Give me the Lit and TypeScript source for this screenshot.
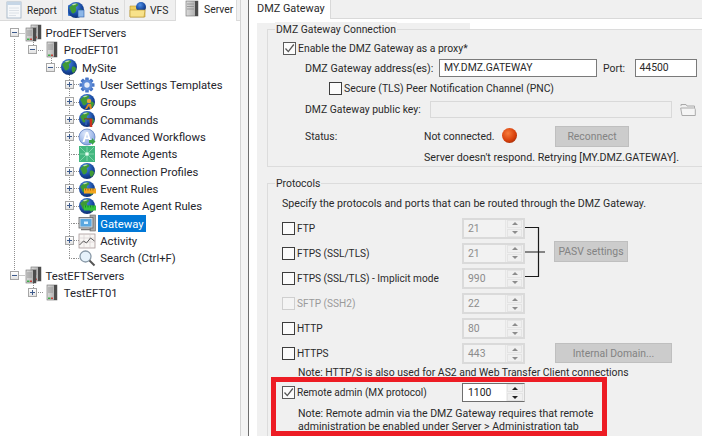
import { LitElement, html, css, svg } from "lit";
import { customElement } from "lit/decorators.js";

const land = svg`<path d="M4 5c2-2 5-3 7-2 1 1-1 2-2 3s1 2 0 4-3 3-4 2-1-3-2-4-1-2 1-3zM12 9c2-1 3 0 4 1 0 2-1 4-3 5-1-1-2-4-1-6z" fill="#3f9a35"/><path d="M5 3.5c1.500-.8 3-1.200 4.500-1 .5.500-1 1-2 1.500S5.500 4.500 5 3.500z" fill="#bfe3a8"/>`;
const globe = svg`<circle cx="9" cy="9" r="8" fill="url(#gb)"/>${land}`;
const wrap = (c: unknown) => html`<svg class="ic" viewBox="0 0 18 18" width="18" height="18">${c}</svg>`;

const tower = (x: number, y: number, w: number, h: number) => svg`
  <rect x="${x}" y="${y}" width="${w}" height="${h}" fill="url(#srv)" stroke="#6f6f6f" stroke-width=".6"/>
  <rect x="${x + w - 3}" y="${y}" width="3" height="${h}" fill="#4c4c4c"/>
  <path d="M${x + 1} ${y + 3}h${w - 5}M${x + 1} ${y + 5}h${w - 5}M${x + 1} ${y + 7}h${w - 5}" stroke="#8d8d8d" stroke-width=".8"/>
  <rect x="${x + 1}" y="${y + h - 2.500}" width="2.500" height="1.500" fill="#3fae49"/>
  <rect x="${x + 4}" y="${y + h - 2.500}" width="2" height="1.500" fill="#c8413b"/>`;

const icons: Record<string, unknown> = {
  stack: wrap(svg`${tower(7, 1, 10, 14)}${tower(2, 4, 10, 13)}`),
  server: wrap(svg`${tower(5, 1, 10, 15)}`),
  globe: wrap(globe),
  gear: wrap(svg`<g transform="translate(9 9)"><g fill="#4a78c8">${[0, 45, 90, 135].map(
    (a) => svg`<rect x="-1.800" y="-7.500" width="3.600" height="15" rx=".6" transform="rotate(${a})"/>`
  )}</g><circle r="5.200" fill="#5f8cd8"/><circle r="2.700" fill="#e8eefa"/></g>`),
  groups: wrap(svg`${globe}<circle cx="11" cy="8" r="2.200" fill="#e5a63a"/><path d="M7 16l3-5h3l1 5h-2l-1-3-2 3z" fill="#d98a22"/>`),
  commands: wrap(svg`${globe}<path d="M6 9h8" stroke="#7a4a20" stroke-width="1.500"/><path d="M13 9v8" stroke="#c8321e" stroke-width="2.500"/><path d="M8 9v6" stroke="#3566b0" stroke-width="1.500"/>`),
  workflow: wrap(svg`<circle cx="9" cy="9" r="8" fill="url(#wf)" stroke="#5577bb" stroke-width=".7"/><path d="M4.500 14L8 4h2l3.500 10h-2L10.700 11H7.300l-.8 3zM7.900 9.500h2.200L9 6z" fill="#fff"/><path d="M11 12h3v-2l3.500 3.500L14 17v-2h-3z" fill="#3aa646"/>`),
  agents: wrap(svg`<rect x="1" y="1" width="16" height="16" fill="#43b77f"/><g stroke="#a8e6c4" stroke-width=".6"><path d="M2 2l14 14M16 2L2 16M9 2v14M2 9h14"/></g><circle cx="9" cy="9" r="1.800" fill="#e8fff2"/>`),
  event: wrap(svg`${globe}<rect x="6" y="8.500" width="12" height="5" fill="#f2a51f"/><path d="M7.500 8.500v2M10 8.500v2M12.500 8.500v2M15 8.500v2" stroke="#9a5a10" stroke-width=".8"/>`),
  rarules: wrap(svg`${globe}<rect x="6" y="8.500" width="12" height="5" fill="#34c23c"/><path d="M7.500 8.500v2M10 8.500v2M12.500 8.500v2M15 8.500v2" stroke="#0f7a1f" stroke-width=".8"/>`),
  gateway: wrap(svg`<rect x="12" y="1" width="5.500" height="16" fill="#a8a8a8" stroke="#666" stroke-width=".6"/><rect x="1" y="3.500" width="14" height="10.500" fill="#cfd6dd" stroke="#666" stroke-width=".8"/><rect x="2.500" y="5" width="11" height="7.500" fill="#5aa7e0"/><rect x="6" y="7.500" width="4" height="2.500" fill="#d8f0ff"/><path d="M3 15.500h10" stroke="#777" stroke-width="1.500"/>`),
  activity: wrap(svg`<rect x="1" y="2" width="16" height="14" fill="#f8f6f4" stroke="#a89a9a" stroke-width=".8"/><path d="M1 6h16M1 10h16M6 2v14M12 2v14" stroke="#d5cccc" stroke-width=".6"/><path d="M1.500 13l4-4 3 2 4-5 4 3" fill="none" stroke="#5a5a5a" stroke-width="1"/>`),
  search: wrap(svg`<circle cx="7.500" cy="7.500" r="5.500" fill="#e6f2fb" stroke="#8a9aa8" stroke-width="1.300"/><path d="M11.500 11.500l5 5" stroke="#555" stroke-width="2"/>`),
  report: wrap(svg`<rect x="2" y="1" width="14" height="16" fill="#f6f8fa" stroke="#9db0c2" stroke-width=".8"/><rect x="2" y="1" width="14" height="3" fill="#c6d6e6"/><path d="M4 7h10M4 9.500h10M4 12h10M4 14.500h7" stroke="#d5dbe2" stroke-width=".8"/>`),
  status: wrap(svg`<rect x="1" y="4" width="14" height="11" rx="1" fill="#3b75c9"/>${globe}<rect x="11" y="9" width="6" height="7" fill="#8db7e8" stroke="#2a5ba8" stroke-width=".6"/>`),
  vfs: wrap(svg`<path d="M1 5h6l1.500 2H16v9H1z" fill="#f1cf5e" stroke="#b8952e" stroke-width=".6"/><circle cx="12" cy="6" r="5" fill="url(#gb)"/><path d="M1 9h15l-1 7H1z" fill="#f8e28a" stroke="#b8952e" stroke-width=".6"/>`),
  tabserver: wrap(svg`<rect x="3" y="1" width="12" height="15" fill="url(#srv)" stroke="#6f6f6f" stroke-width=".6"/><rect x="12" y="1" width="3" height="15" fill="#4c4c4c"/><path d="M4 4h7M4 6.500h7M4 9h7" stroke="#8d8d8d" stroke-width=".8"/>`),
};

type Node = { level: number; icon: string; label: string; exp?: "-" | "+"; sel?: boolean };
const tree: Node[] = [
  { level: 0, icon: "stack", label: "ProdEFTServers", exp: "-" },
  { level: 1, icon: "server", label: "ProdEFT01", exp: "-" },
  { level: 2, icon: "globe", label: "MySite", exp: "-" },
  { level: 3, icon: "gear", label: "User Settings Templates", exp: "+" },
  { level: 3, icon: "groups", label: "Groups", exp: "+" },
  { level: 3, icon: "commands", label: "Commands", exp: "+" },
  { level: 3, icon: "workflow", label: "Advanced Workflows", exp: "+" },
  { level: 3, icon: "agents", label: "Remote Agents" },
  { level: 3, icon: "globe", label: "Connection Profiles", exp: "+" },
  { level: 3, icon: "event", label: "Event Rules", exp: "+" },
  { level: 3, icon: "rarules", label: "Remote Agent Rules", exp: "+" },
  { level: 3, icon: "gateway", label: "Gateway", sel: true },
  { level: 3, icon: "activity", label: "Activity", exp: "+" },
  { level: 3, icon: "search", label: "Search (Ctrl+F)" },
  { level: 0, icon: "stack", label: "TestEFTServers", exp: "-" },
  { level: 1, icon: "server", label: "TestEFT01", exp: "+" },
];

const protos = [
  { label: "FTP", port: "21" },
  { label: "FTPS (SSL/TLS)", port: "21", btn: "pasv" },
  { label: "FTPS (SSL/TLS) - Implicit mode", port: "990" },
  { label: "SFTP (SSH2)", port: "22", off: true },
  { label: "HTTP", port: "80" },
  { label: "HTTPS", port: "443", btn: "domain" },
];

@customElement("app-root")
export class AppRoot extends LitElement {
  static styles = css`
    :host { display: block; width: 702px; height: 436px; overflow: hidden; position: relative;
      font-family: Roboto, "Noto Sans", sans-serif; font-size: 10.400px; color: #2a2a2a; background: #f0f0f0; }
    * { box-sizing: border-box; }
    .defs { position: absolute; width: 0; height: 0; }
    .ic { display: block; flex: none; }
    .app { display: flex; height: 436px; }

    .left { width: 240px; flex: none; background: #fff; position: relative; }
    .strip { display: flex; height: 21px; background: #f0f0f0; border-bottom: 1px solid #dadada; padding-left: 2px; }
    .tab { display: flex; align-items: center; height: 20px; border-right: 1px solid #dcdcdc; }
    .t1 { width: 61px; padding-left: 3px; gap: 4px; font-size: 10px; }
    .t2 { width: 62px; padding-left: 4px; gap: 4.500px; }
    .t3 { width: 51px; padding-left: 4px; gap: 3px; }
    .t4 { width: 62px; padding: 0 0 3px 7px; gap: 3px; background: #fff; border-left: 1px solid #dcdcdc; margin-left: -1px; height: 21px; }
    .treebox { position: relative; padding-top: 3px; }
    .lines { position: absolute; left: 0; top: -21px; }
    .node { position: relative; height: 17.333px; display: flex; align-items: center; white-space: nowrap; color: #24242c; font-size: 11.300px; }
    .slot { width: 18.200px; flex: none; display: flex; justify-content: center; }
    .exp { width: 9px; height: 9px; border: 1px solid #a6a6a6; background: linear-gradient(#fff, #e2e2e2); position: relative; }
    .exp i { position: absolute; left: 1px; top: 3px; width: 5px; height: 1px; background: #3c5a8c; }
    .exp b { position: absolute; left: 3px; top: 1px; width: 1px; height: 5px; background: #3c5a8c; }
    .node .ic { margin-right: 2px; }
    .lbl { padding: 2px 2px 0; line-height: 15px; height: 17px; }
    .sel { background: #0078d7; color: #fff; }

    .split { width: 9px; flex: none; background: #f4f4f4; border-left: 1px solid #d4d4d4; border-right: 1px solid #6e6e6e; }

    .right { flex: 1; min-width: 0; background: #fff; overflow: hidden; }
    .rtabs { display: flex; height: 19px; }
    .rtab { width: 82px; padding-left: 8px; line-height: 18px; font-size: 10.900px; background: #fff; border-right: 1px solid #d9d9d9; }
    .rfill { flex: 1; background: #f0f0f0; border-bottom: 1px solid #d9d9d9; }
    .rtop { height: 10px; display: flex; align-items: flex-end; padding-left: 8px; }
    .rtop i { display: block; width: 213px; height: 6px; background: #f0f0f0; }
    .body { margin-left: 8px; background: #f0f0f0; padding-left: 10px; height: 407px; }
    .group { position: relative; border: 1px solid #dcdcdc; border-right: 0; margin-right: -10px; }
    .g2 { margin-top: 16px; height: 270px; }
    .legend { position: absolute; left: 7px; top: -8px; background: #f0f0f0; padding: 0 1px; line-height: 15px; }
    .r { display: flex; align-items: center; white-space: nowrap; }
    .r1 { margin: 9px 0 0 15px; height: 18px; gap: 2px; }
    .r2 { margin: 1px 0 0 37px; height: 20px; }
    .r3 { margin: 1px 0 0 61px; height: 18px; gap: 2px; }
    .r4 { margin: 3px 0 0 37px; height: 19px; }
    .r5 { margin: 7px 0 0 37px; height: 21px; }
    .r6 { margin: 1px 0 0 156px; height: 18px; font-size: 10.700px; }
    .w134 { width: 134px; flex: none; font-size: 10.700px; } .w125 { width: 125px; flex: none; } .w119 { width: 119px; flex: none; } .w78 { width: 78px; flex: none; }
    .port { width: 31.500px; margin-left: 6px; flex: none; }
    .field { height: 18px; border: 1px solid #7a7a7a; background: #fff; padding-left: 4px; line-height: 16px; flex: none; }
    .f1 { width: 158px; } .f2 { width: 62.500px; }
    .f3 { width: 242px; border-color: #d9d9d9; background: #f0f0f0; height: 17px; }
    .folder { margin-left: 8px; flex: none; }
    .ball { width: 15px; height: 15px; margin-bottom: 2px; border-radius: 50%; flex: none; background: radial-gradient(circle at 40% 35%, #f77b3a, #d8400c 55%, #7c2006); }
    .btn { background: #cccccc; border: 1px solid #bfbfbf; color: #838383; display: flex; align-items: center; justify-content: center; flex: none; white-space: nowrap; }
    .reconnect { width: 74px; height: 21px; margin-left: 38px; }

    .cb { width: 13px; height: 13px; border: 1px solid #3d3d3d; background: #fbfbfb; flex: none; display: block; }
    .cb svg { display: block; }
    .cb.off { border-color: #cfcfcf; background: #f4f4f4; }
    .cb.on { border-color: #5a5a5a; }

    .spec { margin: 10px 0 0 14px; height: 18px; display: flex; align-items: center; font-size: 10.650px; }
    .protos { margin-top: 5.500px; display: grid; row-gap: 4.200px; grid-auto-rows: 21px; }
    .pr { display: grid; grid-template-columns: 180px 63px auto; padding-left: 14px; align-items: center; }
    .chk { display: flex; align-items: center; gap: 2px; white-space: nowrap; font-size: 10.100px; }
    .dis { color: #9a9a9a; }
    .spin { height: 21px; width: 63px; border: 2px solid #dadada; display: flex; background: #f0f0f0; }
    .spin .v { flex: 1; padding-left: 4px; line-height: 17px; color: #8c8c8c; background: #f2f2f2; border-right: 1px solid #e6e6e6; }
    .spin .b { width: 15px; margin: 0 1px; flex: none; display: flex; flex-direction: column; gap: 1px; }
    .spin .b span { flex: 1; background: #f0f0f0; border: 1px solid #e4e4e4; display: flex; align-items: center; justify-content: center; }
    .tri { width: 0; height: 0; border-left: 3px solid transparent; border-right: 3px solid transparent; }
    .tri.u { border-bottom: 3px solid #8c8c8c; }
    .tri.d { border-top: 3px solid #8c8c8c; }
    .spin.act { height: 19px; border: 1px solid #cfcfcf; border-left-color: #6e6e6e; border-top-color: #6e6e6e; border-bottom-color: #6e6e6e; background: #f0f0f0; }
    .spin.act .v { color: #222; background: #fff; padding-left: 5px; line-height: 17px; border-right: 0; }
    .spin.act .b { width: 16px; margin: 0 1px 0 1px; }
    .spin.act .tri.u { border-bottom-color: #222; }
    .spin.act .tri.d { border-top-color: #222; }
    .pasv { width: 74px; height: 21px; margin: -3px 0 0 29px; }
    .domain { width: 117px; height: 20px; margin: -1px 0 0 30px; }
    .note { margin-left: 30px; height: 18px; line-height: 20px; white-space: nowrap; margin-top: -1px; }
    .rem { margin-top: 2px; height: 19px; padding-left: 14px; display: grid; grid-template-columns: 180px 63px; align-items: center; }
    .note2 { margin: 4.500px 0 0 30px; line-height: 13px; white-space: nowrap; font-size: 10.550px; }
    .bracket { position: absolute; left: 257px; top: 42px; }
    .red { position: absolute; left: 271px; top: 377px; width: 336px; height: 59px; border: 5px solid #ed1c24; }
  `;

  private check(state: "" | "on" | "off" = "") {
    return html`<span class="cb ${state}">${state === "on"
      ? html`<svg viewBox="0 0 11 11" width="11" height="11"><path d="M1.500 5.500L4.300 8.600 9.800 1.500" fill="none" stroke="#555" stroke-width="1.300"/></svg>`
      : ""}</span>`;
  }

  private spin(v: string, act = false) {
    return html`<div class="spin ${act ? "act" : ""}"><div class="v">${v}</div>
      <div class="b"><span><i class="tri u"></i></span><span><i class="tri d"></i></span></div></div>`;
  }

  private lines() {
    const y = (i: number) => 32.5 + 17.333 * i;
    const cx = [14.5, 33, 51, 69];
    const segs: string[] = [];
    const v = (x: number, a: number, b: number) => segs.push(`M${x + 0.5} ${a}V${b}`);
    const h = (a: number, b: number, yy: number) => segs.push(`M${a} ${Math.round(yy) + 0.5}H${b}`);
    v(14, 39, 270);
    v(33, 40, 46);
    v(51, 58, 63);
    v(69, 73, y(13));
    v(33, 283, 288);
    tree.forEach((n, i) => h(cx[n.level] + 5, cx[n.level] + 11, y(i)));
    tree.forEach((n, i) => { if (n.level === 3 && !n.exp) h(cx[3], cx[3] + 5, y(i)); });
    return html`<svg class="lines" width="240" height="330" viewBox="0 0 240 330"><path d="${segs.join("")}" fill="none" stroke="#8f8f8f" stroke-dasharray="1 1"/></svg>`;
  }

  render() {
    return html`
      <svg class="defs"><defs>
        <radialGradient id="gb" cx=".4" cy=".3" r=".8"><stop offset="0" stop-color="#4f8fe6"/><stop offset=".6" stop-color="#17489f"/><stop offset="1" stop-color="#0a2560"/></radialGradient>
        <radialGradient id="wf" cx=".4" cy=".3" r=".8"><stop offset="0" stop-color="#dfe9fb"/><stop offset="1" stop-color="#7d9ede"/></radialGradient>
        <linearGradient id="srv" x1="0" x2="1" y1="0" y2="0"><stop offset="0" stop-color="#dcdcdc"/><stop offset="1" stop-color="#a2a2a2"/></linearGradient>
      </defs></svg>
      <div class="app">
        <div class="left">
          <div class="strip">
            <div class="tab t1">${icons.report}<span>Report</span></div>
            <div class="tab t2">${icons.status}<span>Status</span></div>
            <div class="tab t3">${icons.vfs}<span>VFS</span></div>
            <div class="tab t4">${icons.tabserver}<span>Server</span></div>
          </div>
          <div class="treebox">
            ${this.lines()}
            ${tree.map(
              (n) => html`<div class="node" style="padding-left:${5.4 + 18.2 * n.level}px">
                <div class="slot">${n.exp
                  ? html`<span class="exp"><i></i>${n.exp === "+" ? html`<b></b>` : ""}</span>`
                  : ""}</div>
                ${icons[n.icon]}
                <span class="lbl ${n.sel ? "sel" : ""}">${n.label}</span>
              </div>`
            )}
          </div>
        </div>
        <div class="split"></div>
        <div class="right">
          <div class="rtabs"><div class="rtab">DMZ Gateway</div><div class="rfill"></div></div>
          <div class="rtop"><i></i></div>
          <div class="body">
            <div class="group">
              <div class="legend">DMZ Gateway Connection</div>
              <div class="r r1">${this.check("on")}<span>Enable the DMZ Gateway as a proxy*</span></div>
              <div class="r r2"><span class="w134">DMZ Gateway address(es):</span><div class="field f1">MY.DMZ.GATEWAY</div><span class="port">Port:</span><div class="field f2">44500</div></div>
              <div class="r r3">${this.check()}<span>Secure (TLS) Peer Notification Channel (PNC)</span></div>
              <div class="r r4"><span class="w125">DMZ Gateway public key:</span><div class="field f3"></div>
                <svg class="folder" width="16" height="14" viewBox="0 0 16 14"><path d="M1 3V1.500h5L7 3h7.500v2" fill="#efefef" stroke="#aaa"/><path d="M.7 5h12.800c1 0 1.800.5 1.800 1.500v6H2z" fill="#f5f5f5" stroke="#aaa"/></svg></div>
              <div class="r r5"><span class="w119">Status:</span><span class="w78">Not connected.</span><i class="ball"></i><div class="btn reconnect">Reconnect</div></div>
              <div class="r r6">Server doesn't respond. Retrying [MY.DMZ.GATEWAY].</div>
            </div>
            <div class="group g2">
              <div class="legend">Protocols</div>
              <div class="spec">Specify the protocols and ports that can be routed through the DMZ Gateway.</div>
              <div class="protos">
                ${protos.map(
                  (p) => html`<div class="pr">
                    <div class="chk ${p.off ? "dis" : ""}">${this.check(p.off ? "off" : "")}<span>${p.label}</span></div>
                    ${this.spin(p.port)}
                    ${p.btn === "pasv" ? html`<div class="btn pasv">PASV settings</div>` : ""}
                    ${p.btn === "domain" ? html`<div class="btn domain">Internal Domain...</div>` : ""}
                  </div>`
                )}
              </div>
              <div class="note">Note: HTTP/S is also used for AS2 and Web Transfer Client connections</div>
              <div class="rem"><div class="chk">${this.check("on")}<span>Remote admin (MX protocol)</span></div>${this.spin("1100", true)}</div>
              <div class="note2">Note: Remote admin via the DMZ Gateway requires that remote<br />administration be enabled under Server &gt; Administration tab</div>
              <svg class="bracket" width="21" height="52" viewBox="0 0 21 52"><path d="M0 1.500H13.500V50.500H0M0 26H20" fill="none" stroke="#1a1a1a" stroke-width="1.200"/></svg>
            </div>
          </div>
        </div>
      </div>
      <div class="red"></div>
    `;
  }
}
